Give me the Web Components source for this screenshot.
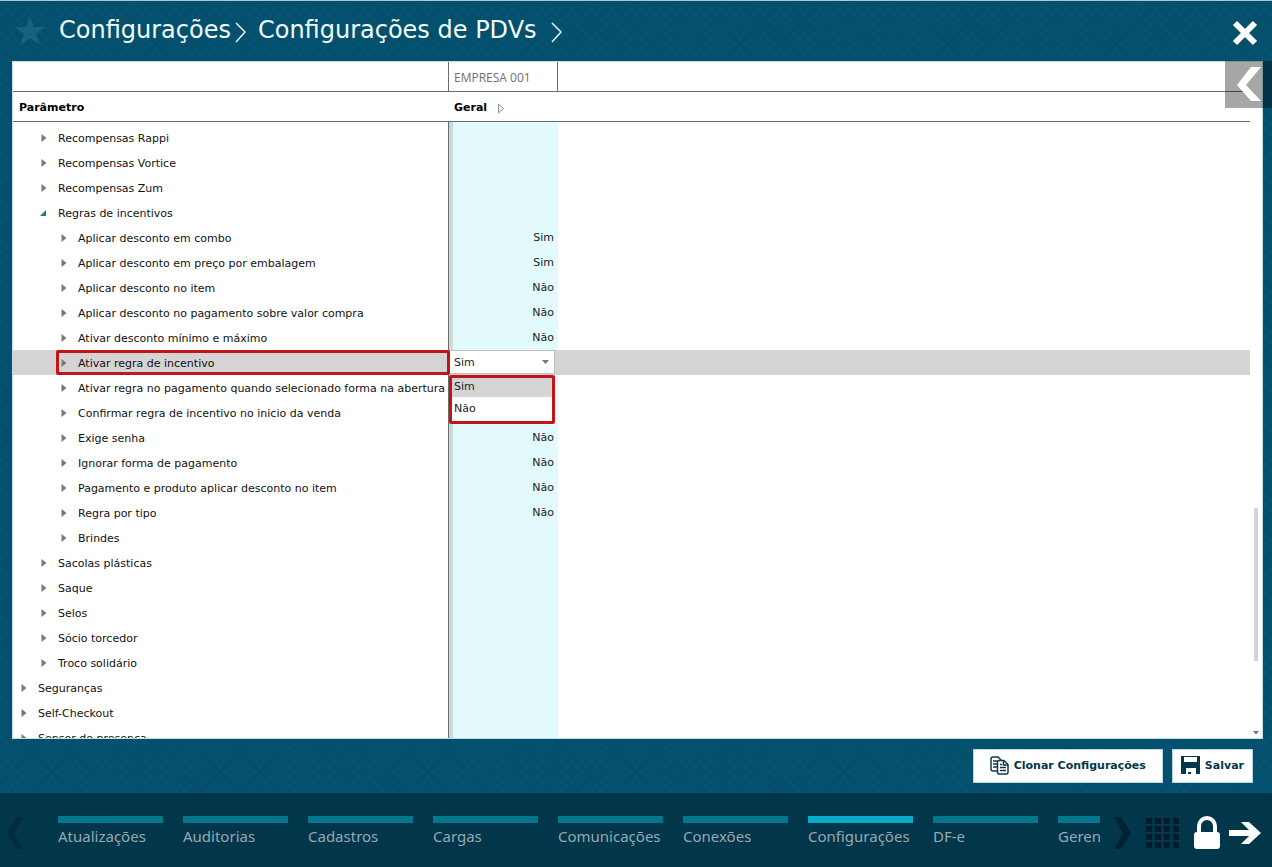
<!DOCTYPE html>
<html lang="pt-BR">
<head>
<meta charset="utf-8">
<title>Configurações de PDVs</title>
<style>
html, body
{
    height: 100%;
    margin: 0;
}
body
{
    --back: #04526f;
    --dark: #02364a;
    --teal: #05778d;
    --line: #6b6b6b;
    --mark: #c2151a;
    --selected: #d5d3d4;
    font-family: "DejaVu Sans", Verdana, sans-serif;
    font-size: 11px;
    color: #111;
}
</style>
</head>
<body>
<pdv-app>
    <page-title slot="title">
        <a href="#configuracoes">Configurações</a>
        <a href="#pdvs">Configurações de PDVs</a>
    </page-title>
    <param-table></param-table>
    <action-button slot="actions" icon="clone">Clonar Configurações</action-button>
    <action-button slot="actions" icon="save">Salvar</action-button>
    <module-bar slot="footer">
        <module-tab>Atualizações</module-tab>
        <module-tab>Auditorias</module-tab>
        <module-tab>Cadastros</module-tab>
        <module-tab>Cargas</module-tab>
        <module-tab>Comunicações</module-tab>
        <module-tab>Conexões</module-tab>
        <module-tab active>Configurações</module-tab>
        <module-tab>DF-e</module-tab>
        <module-tab>Gerenciador</module-tab>
    </module-bar>
</pdv-app>

<script>
class PdvApp extends HTMLElement
{
    constructor()
    {
        super();
        this.attachShadow({mode:'open'}).innerHTML = `
<style>
:host
{
    display: flex;
    flex-direction: column;
    height: 100vh;
    box-sizing: border-box;
    border-top: 1px solid #b4c6d2;
    background:
        repeating-linear-gradient(45deg, #0000 0 5px, #00304514 5px 7px),
        repeating-linear-gradient(-45deg, #0000 0 5px, #00304514 5px 7px),
        var(--back);
    overflow: hidden;
}
main
{
    flex: 1;
    min-height: 0;
    display: flex;
    margin: 0 9px 0 12px;
    position: relative;
}
param-table, ::slotted(param-table)
{
    flex: 1;
}
.drawer
{
    position: absolute;
    top: 0;
    right: -9px;
    width: 47px;
    height: 47px;
    padding: 0;
    border: 0;
    background: #00000059;
}
.drawer svg
{
    display: block;
}
.actions
{
    display: flex;
    justify-content: flex-end;
    align-items: center;
    gap: 9px;
    height: 54px;
    padding-right: 19px;
}
</style>
<slot name="title"></slot>
<main>
    <slot></slot>
    <button class="drawer" aria-label="Abrir painel">
        <svg width="47" height="47"><path d="M26 6h10L21 24l15 16H26L12 24z" fill="#fff"/></svg>
    </button>
</main>
<div class="actions"><slot name="actions"></slot></div>
<slot name="footer"></slot>
`;
    }
}

class PageTitle extends HTMLElement
{
    constructor()
    {
        super();
        this.attachShadow({mode:'open'}).innerHTML = `
<style>
:host
{
    display: flex;
    align-items: center;
    height: 60px;
    padding: 0 10px 0 14px;
    font-size: 24px;
}
button
{
    padding: 0;
    border: 0;
    background: none;
}
svg
{
    display: block;
}
nav
{
    flex: 1;
    display: flex;
    align-items: center;
    margin-left: 13px;
    padding-bottom: 2px;
}
::slotted(a)
{
    color: #f2fcff;
    text-decoration: none;
}
.sep
{
    fill: none;
    stroke: #e4f5fa;
    stroke-width: 1.500;
}
.first
{
    margin: 3px 11px 0 3px;
}
.last
{
    margin: 3px 0 0 13px;
}
.close
{
    padding-top: 4px;
}
</style>
<button aria-label="Favorito">
    <svg width="32" height="32"><path d="M16 1l4 11h11l-9 7 4 11-10-7-10 7 4-11-9-7h11z" fill="#17617f"/></svg>
</button>
<nav>
    <slot name="first"></slot>
    <svg class="sep first" width="13" height="22"><path d="M2 2l9 9-9 10"/></svg>
    <slot name="second"></slot>
    <svg class="sep last" width="13" height="22"><path d="M2 2l9 9-9 10"/></svg>
</nav>
<button class="close" aria-label="Fechar">
    <svg width="34" height="34"><path d="M7 7l20 20M27 7L7 27" stroke="#fff" stroke-width="6"/></svg>
</button>
`;
    }

    connectedCallback()
    {
        const links = this.querySelectorAll('a');
        links[0].slot = 'first';
        links[1].slot = 'second';
    }
}

// [level, name, value, state]
const PARAMS = [
    [1, 'Recompensas Rappi'],
    [1, 'Recompensas Vortice'],
    [1, 'Recompensas Zum'],
    [1, 'Regras de incentivos', '', 'open'],
    [2, 'Aplicar desconto em combo', 'Sim'],
    [2, 'Aplicar desconto em preço por embalagem', 'Sim'],
    [2, 'Aplicar desconto no item', 'Não'],
    [2, 'Aplicar desconto no pagamento sobre valor compra', 'Não'],
    [2, 'Ativar desconto mínimo e máximo', 'Não'],
    [2, 'Ativar regra de incentivo', 'Sim', 'edit'],
    [2, 'Ativar regra no pagamento quando selecionado forma na abertura'],
    [2, 'Confirmar regra de incentivo no inicio da venda'],
    [2, 'Exige senha', 'Não'],
    [2, 'Ignorar forma de pagamento', 'Não'],
    [2, 'Pagamento e produto aplicar desconto no item', 'Não'],
    [2, 'Regra por tipo', 'Não'],
    [2, 'Brindes'],
    [1, 'Sacolas plásticas'],
    [1, 'Saque'],
    [1, 'Selos'],
    [1, 'Sócio torcedor'],
    [1, 'Troco solidário'],
    [0, 'Seguranças'],
    [0, 'Self-Checkout'],
    [0, 'Sensor de presença']
];

class ParamTable extends HTMLElement
{
    constructor()
    {
        super();
        this.attachShadow({mode:'open'}).innerHTML = `
<style>
:host
{
    display: flex;
    min-width: 0;
    box-sizing: border-box;
    border: 1px solid #c3dfe8;
    background: #fff;
    overflow: hidden;
}
.view
{
    flex: 1;
    overflow: hidden;
}
table
{
    width: 100%;
    border-collapse: separate;
    border-spacing: 0;
    table-layout: fixed;
}
th, td
{
    padding: 0;
    box-sizing: border-box;
    text-align: left;
}
th
{
    height: 30px;
    padding: 2px 6px 0;
    border-bottom: 1px solid var(--line);
    font-weight: bold;
    color: #000;
}
.company
{
    padding: 2px 5px 0;
    border-left: 1px solid var(--line);
    border-right: 1px solid var(--line);
    font: 12px "Open Sans", sans-serif;
    color: #6f6f6f;
}
.general svg
{
    margin-left: 6px;
    vertical-align: -3px;
}
td
{
    height: 25px;
    white-space: nowrap;
}
.gap td
{
    height: 3px;
}
td.value
{
    border-left: 1px solid var(--line);
    background: linear-gradient(90deg, #c8dcdc 4px, #e3fafc 4px);
    text-align: right;
    padding: 0 4px 0 0;
    color: #222;
}
.name
{
    display: flex;
    align-items: center;
    box-sizing: border-box;
    height: 25px;
    padding-top: 2px;
}
.l0 { padding-left: 7px; }
.l1 { padding-left: 27px; }
.l2 { padding-left: 47px; }
.name button
{
    width: 8px;
    height: 9px;
    margin: 0 10px 1px 0;
    padding: 0;
    border: 0;
    background: none;
}
.name svg
{
    display: block;
}
.edit td
{
    background: var(--selected);
}
.edit td.value
{
    padding: 0;
}
.edit .name
{
    position: relative;
    z-index: 1;
    margin: 0 -2px 0 43px;
    padding-left: 1px;
    border: 3px solid var(--mark);
    border-radius: 2px;
}
</style>
<div class="view">
<table>
    <colgroup><col style="width:435px"><col style="width:110px"><col></colgroup>
    <thead>
        <tr><th></th><th class="company">EMPRESA 001</th><th></th></tr>
        <tr>
            <th>Parâmetro</th>
            <th class="general">Geral <svg width="8" height="11"><path d="M1.500 1v9l5-4.500z" fill="#eee" stroke="#999"/></svg></th>
            <th></th>
        </tr>
    </thead>
    <tbody><tr class="gap"><td></td><td class="value"></td><td></td></tr></tbody>
</table>
</div>
<scroll-mark></scroll-mark>
`;
        const body = this.shadowRoot.querySelector('tbody');
        PARAMS.forEach(param => body.appendChild(this.createRow(param)));
    }

    createRow([level, name, value = '', state = ''])
    {
        const row = document.createElement('tr');
        row.className = state;
        const arrow = state === 'open'
            ? '<path d="M6 1v6H0z" fill="#1c7f86"/>'
            : '<path d="M1.500 0v8l5-4z" fill="#787878"/>';
        row.innerHTML = `
<td><div class="name l${level}"><button><svg width="8" height="9">${arrow}</svg></button><span></span></div></td>
<td class="value"></td>
<td></td>`;
        row.querySelector('button').setAttribute('aria-label', 'Expandir ' + name);
        row.querySelector('span').textContent = name;
        const cell = row.querySelector('.value');
        if (state === 'edit')
        {
            const editor = document.createElement('value-select');
            editor.setAttribute('label', name);
            cell.appendChild(editor);
        }
        else
        {
            cell.textContent = value;
        }
        return row;
    }
}

class ScrollMark extends HTMLElement
{
    constructor()
    {
        super();
        this.attachShadow({mode:'open'}).innerHTML = `
<style>
:host
{
    display: flex;
    flex-direction: column;
    align-items: center;
    width: 12px;
    padding-bottom: 3px;
}
i
{
    flex: 446;
}
b
{
    flex: 153;
    width: 4px;
    background: #d5d3d4;
}
i + b + i
{
    flex: 70;
}
</style>
<i></i><b></b><i></i>
<svg width="6" height="4"><path d="M0 0h6L3 3.500z" fill="#777"/></svg>
`;
    }
}

class ValueSelect extends HTMLElement
{
    constructor()
    {
        super();
        this.attachShadow({mode:'open'}).innerHTML = `
<style>
:host
{
    display: block;
    position: relative;
    width: 106px;
    height: 25px;
    text-align: left;
}
select
{
    appearance: none;
    display: block;
    width: 106px;
    height: 24px;
    margin: 0;
    padding: 0 4px;
    border: 1px solid #bdbdbd;
    border-radius: 0;
    background: #fff;
    font: inherit;
    color: #222;
}
.arrow
{
    position: absolute;
    top: 10px;
    right: 6px;
    pointer-events: none;
}
ul
{
    position: absolute;
    top: 25px;
    left: 0;
    z-index: 1;
    box-sizing: border-box;
    width: 106px;
    margin: 0;
    padding: 0;
    border: 3px solid var(--mark);
    border-radius: 2px;
    background: #fff;
    list-style: none;
}
li
{
    padding: 0 2px;
    height: 24px;
    line-height: 24px;
}
li[aria-selected=true]
{
    height: 19px;
    line-height: 18px;
    background: var(--selected);
}
</style>
<select><option>Sim</option><option>Não</option></select>
<svg class="arrow" width="7" height="4"><path d="M0 0h7L3.500 4z" fill="#777"/></svg>
<ul role="listbox"><li role="option" aria-selected="true">Sim</li><li role="option">Não</li></ul>
`;
    }

    connectedCallback()
    {
        const label = this.getAttribute('label');
        this.select = this.shadowRoot.querySelector('select');
        this.select.setAttribute('aria-label', label);
        this.shadowRoot.querySelectorAll('li').forEach(item => item.addEventListener('click', this.pick.bind(this)));
    }

    pick(event)
    {
        this.select.value = event.target.textContent;
        this.shadowRoot.querySelectorAll('li').forEach(item => item.setAttribute('aria-selected', item === event.target));
    }
}

const ICONS = {
    clone: `<g fill="#fff" stroke="#12384a" stroke-width="1.500">
        <path d="M1 3q0-2 2-2h5l3 3v11H3q-2 0-2-2z"/><path d="M3 5h4M3 8h4M3 11h4"/>
        <path d="M7.500 6q0-1.500 1.500-1.500h5l4 4V16.500q0 1.500-1.500 1.500H9q-1.500 0-1.500-1.500z"/><path d="M13.500 4.500V9H18M10 8.500h2M10 11.500h6M10 14.500h6" fill="none"/></g>`,
    save: `<path d="M0 0h19v18H0z" fill="#02364a"/><path d="M3 1h13v5H3zM5 12h10v6H5z" fill="#fff"/><path d="M7 16h3v2H7z" fill="#02364a"/>`
};

class ActionButton extends HTMLElement
{
    constructor()
    {
        super();
        this.attachShadow({mode:'open'}).innerHTML = `
<style>
:host
{
    display: block;
}
button
{
    display: flex;
    align-items: center;
    gap: 5px;
    height: 34px;
    padding: 0 8px 1px;
    border: 1px solid #b9d7e1;
    background: #fff;
    font: bold 11px "DejaVu Sans", Verdana, sans-serif;
    color: #02364a;
}
:host([icon=clone]) button
{
    padding: 0 16px 1px;
}
</style>
<button><svg width="19" height="19"></svg><slot></slot></button>
`;
    }

    connectedCallback()
    {
        this.shadowRoot.querySelector('svg').innerHTML = ICONS[this.getAttribute('icon')];
    }
}

class ModuleBar extends HTMLElement
{
    constructor()
    {
        super();
        let dots = '';
        for (let i = 0; i < 16; i++)
        {
            dots += `<path d="M${i % 4 * 9} ${(i >> 2) * 8}h6v6h-6z"/>`;
        }
        this.attachShadow({mode:'open'}).innerHTML = `
<style>
:host
{
    display: flex;
    height: 74px;
    padding: 0 10px 0 6px;
    background: var(--dark);
    color: #96a9b2;
    font: 15px "Noto Sans", Tahoma, sans-serif;
}
nav
{
    flex: 1;
    min-width: 0;
    display: flex;
    gap: 20px;
    margin: 0 14px 0 34px;
    padding-top: 23px;
    overflow: hidden;
}
button
{
    align-self: center;
    padding: 6px 0 0;
    border: 0;
    background: none;
}
svg
{
    display: block;
}
.icons
{
    display: flex;
    gap: 14px;
}
.icons button:last-child
{
    margin-left: -7px;
}
</style>
<button aria-label="Anterior"><svg width="18" height="34"><path d="M11 1h6L8 17l9 16h-6L1 17z" fill="#022c3d"/></svg></button>
<nav><slot></slot></nav>
<div class="icons">
    <button aria-label="Próximo"><svg width="18" height="34"><path d="M0 1h7l10 16L7 33H0l9-16z" fill="#012230"/></svg></button>
    <button aria-label="Módulos"><svg width="33" height="31" fill="#011d2a">${dots}</svg></button>
    <button aria-label="Bloquear"><svg width="28" height="34"><path d="M6 17v-7a8 8 0 0 1 16 0v7" fill="none" stroke="#fff" stroke-width="4"/><rect x="1" y="16" width="26" height="17" rx="3" fill="#fff"/></svg></button>
    <button aria-label="Sair"><svg width="34" height="24"><path d="M1 9h20l-8-8h8l12 11-12 11h-8l8-8H1z" fill="#fff"/></svg></button>
</div>
`;
    }
}

class ModuleTab extends HTMLElement
{
    constructor()
    {
        super();
        this.attachShadow({mode:'open'}).innerHTML = `
<style>
:host
{
    display: block;
    flex: 0 0 105px;
}
a
{
    display: block;
    border-top: 7px solid var(--teal);
    padding-top: 3px;
    line-height: 20px;
    color: inherit;
    text-decoration: none;
    white-space: nowrap;
}
:host([active]) a
{
    border-color: #0baac9;
}
</style>
<a href="#modulo"><slot></slot></a>
`;
    }
}

customElements.define('pdv-app', PdvApp);
customElements.define('page-title', PageTitle);
customElements.define('scroll-mark', ScrollMark);
customElements.define('value-select', ValueSelect);
customElements.define('param-table', ParamTable);
customElements.define('action-button', ActionButton);
customElements.define('module-bar', ModuleBar);
customElements.define('module-tab', ModuleTab);
</script>
</body>
</html>
